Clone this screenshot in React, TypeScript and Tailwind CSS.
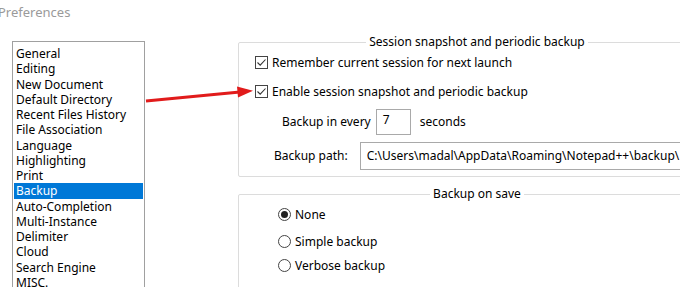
import React from "react";

const items = [
  "General",
  "Editing",
  "New Document",
  "Default Directory",
  "Recent Files History",
  "File Association",
  "Language",
  "Highlighting",
  "Print",
  "Backup",
  "Auto-Completion",
  "Multi-Instance",
  "Delimiter",
  "Cloud",
  "Search Engine",
  "MISC.",
  "Performance",
];

function Check() {
  return (
    <span className="w-[13px] h-[13px] border border-[#444] bg-white flex items-center justify-center shrink-0">
      <svg width="11" height="11" viewBox="0 0 11 11">
        <path d="M1.5 5.5 L4.2 8.2 L9.5 2.5" fill="none" stroke="#333" strokeWidth="1.1" />
      </svg>
    </span>
  );
}

function Radio({ on }: { on?: boolean }) {
  return (
    <span className="w-[13px] h-[13px] rounded-full border border-[#444] bg-white flex items-center justify-center shrink-0">
      {on && <span className="w-[7px] h-[7px] rounded-full bg-[#222]" />}
    </span>
  );
}

export default function App() {
  return (
    <div
      className="relative w-[680px] h-[287px] overflow-hidden bg-white text-black"
      style={{ fontFamily: '"Noto Sans", "Open Sans", sans-serif' }}
    >
      <div className="h-[24px] ml-[-2px] text-[13px] leading-[24px] text-[#9a9a9a]">Preferences</div>
      <div className="flex items-start mt-[17px]">
        <div className="shrink-0 ml-[12px] w-[133px] h-[300px] border border-[#a0a0a0] pt-[4px] pl-[1px] pr-[1px]">
          {items.map((it) => (
            <div
              key={it}
              className={
                "h-[15.27px] leading-[15px] pl-[2px] text-[12px] whitespace-nowrap " +
                (it === "Backup" ? "bg-[#0078d7] text-white" : "")
              }
            >
              {it}
            </div>
          ))}
        </div>
        <div className="shrink-0 ml-[93px] flex flex-col mt-[1px]">
          <div className="relative w-[478px] border border-[#dcdcdc] rounded-[2px] pl-[16px] pt-[10px] pb-[6px] text-[12px]">
            <span className="absolute top-[-9px] left-0 right-0 flex justify-center">
              <span className="bg-white px-[3px] leading-[16px]">Session snapshot and periodic backup</span>
            </span>
            <div className="h-[19px] flex items-center gap-[4px]">
              <Check />
              <span>Remember current session for next launch</span>
            </div>
            <div className="h-[19px] flex items-center gap-[4px] mt-[10px]">
              <Check />
              <span>Enable session snapshot and periodic backup</span>
            </div>
            <div className="h-[26px] flex items-center mt-[8px] ml-[27px]">
              <span>Backup in every</span>
              <span className="ml-[5px] w-[35px] h-[26px] border border-[#a9a9a9] pl-[6px] leading-[20px]">7</span>
              <span className="ml-[9px]">seconds</span>
            </div>
            <div className="h-[28px] flex items-center mt-[7px] ml-[19px]">
              <span>Backup path:</span>
              <span className="ml-[12px] flex-1 h-[28px] border border-[#a9a9a9] pl-[6px] flex items-center whitespace-nowrap overflow-hidden">
                C:\Users\madal\AppData\Roaming\Notepad++\backup\
              </span>
            </div>
          </div>
          <div className="relative w-[478px] h-[120px] border border-[#dcdcdc] rounded-[2px] mt-[17px] pl-[39px] pt-[10px] text-[12px]">
            <span className="absolute top-[-9px] left-0 right-0 flex justify-center">
              <span className="bg-white px-[3px] leading-[16px]">Backup on save</span>
            </span>
            <div className="h-[19px] flex items-center gap-[4px]">
              <Radio on />
              <span>None</span>
            </div>
            <div className="h-[19px] flex items-center gap-[4px] mt-[8px]">
              <Radio />
              <span>Simple backup</span>
            </div>
            <div className="h-[19px] flex items-center gap-[4px] mt-[5px]">
              <Radio />
              <span>Verbose backup</span>
            </div>
          </div>
        </div>
      </div>
      <svg className="absolute left-0 top-0 pointer-events-none" width="680" height="287">
        <line x1="146" y1="101" x2="240" y2="92" stroke="#e11b1b" strokeWidth="3" />
        <polygon points="253,90.8 237,86.5 238,97.5" fill="#e11b1b" />
      </svg>
    </div>
  );
}
